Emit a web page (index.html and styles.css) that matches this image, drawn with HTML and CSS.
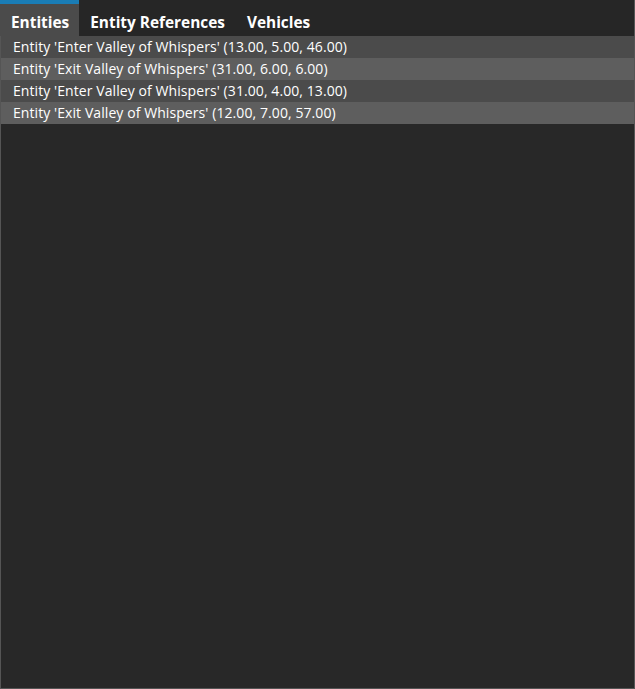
FILE: index.html
```html
<!DOCTYPE html>
<html>
<head>
<meta charset="utf-8">
<link rel="stylesheet" href="styles.css">
</head>
<body>
<div class="panel">
  <div class="tabs">
    <div class="tab active">Entities</div>
    <div class="tab">Entity References</div>
    <div class="tab">Vehicles</div>
  </div>
  <div class="list">
    <div class="row">Entity 'Enter Valley of Whispers' (13.00, 5.00, 46.00)</div>
    <div class="row alt">Entity 'Exit Valley of Whispers' (31.00, 6.00, 6.00)</div>
    <div class="row">Entity 'Enter Valley of Whispers' (31.00, 4.00, 13.00)</div>
    <div class="row alt">Entity 'Exit Valley of Whispers' (12.00, 7.00, 57.00)</div>
  </div>
</div>
</body>
</html>
```
FILE: styles.css
```css
html, body {
  margin: 0;
  padding: 0;
  background: #282828;
}
.panel {
  box-sizing: border-box;
  width: 635px;
  height: 689px;
  border: 1px solid #555555;
  border-top: none;
  background: #282828;
  display: flex;
  flex-direction: column;
  font-family: "Open Sans", "Noto Sans", sans-serif;
  color: #ffffff;
}
.tabs {
  display: flex;
  height: 36px;
  background: #262626;
  margin-left: -1px;
}
.tab {
  box-sizing: border-box;
  padding: 5px 11px 0 11px;
  border-top: 4px solid transparent;
  font-weight: 700;
  font-size: 15.4px;
  line-height: 27px;
  white-space: nowrap;
}
.tab.active {
  background: #4b4b4b;
  border-top-color: #1a7db6;
  padding-left: 11px;
  padding-right: 10px;
}
.list {
  display: flex;
  flex-direction: column;
}
.row {
  height: 22px;
  line-height: 22px;
  padding-left: 12px;
  font-size: 14px;
  letter-spacing: 0.08px;
  background: #4b4b4b;
  white-space: nowrap;
}
.row.alt {
  background: #5e5e5e;
}
```
